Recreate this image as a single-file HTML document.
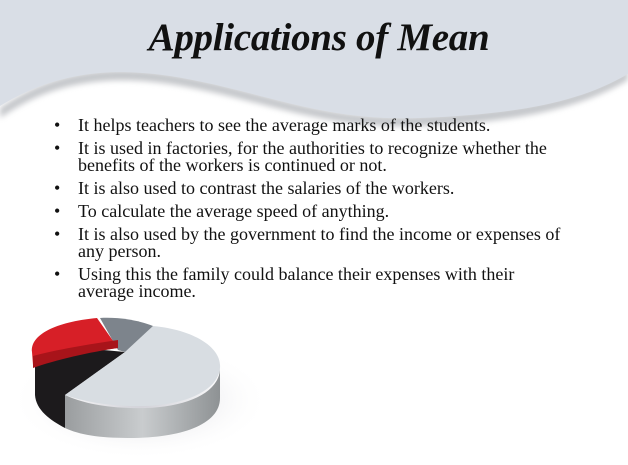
<!DOCTYPE html>
<html><head><style>
html,body{margin:0;padding:0;width:628px;height:465px;overflow:hidden;background:#fff;position:relative}
svg{position:absolute;left:0;top:0}
.t{position:absolute;left:0;width:638px;top:15px;text-align:center;font-family:"Liberation Serif",serif;font-style:italic;font-weight:bold;font-size:39px;color:#111;letter-spacing:-0.3px}
ul{position:absolute;left:50px;top:117px;margin:0;padding:0;list-style:none;font-family:"Liberation Serif",serif;font-size:18px;line-height:17px;color:#111;width:530px}
li{position:relative;padding-left:28px;margin-bottom:6px}
li:before{content:"•";position:absolute;left:4px;top:0}
</style></head><body>
<svg width="628" height="465">
<defs>
<linearGradient id="side" x1="0" x2="1"><stop offset="0" stop-color="#9a9d9f"/><stop offset="0.5" stop-color="#c9ccce"/><stop offset="1" stop-color="#8e9294"/></linearGradient>
<radialGradient id="sh" cx="0.5" cy="0.5" r="0.5"><stop offset="0" stop-color="#c8c8d0"/><stop offset="1" stop-color="#fff" stop-opacity="0"/></radialGradient>
<filter id="b"><feGaussianBlur stdDeviation="3"/></filter>
</defs>
<path d="M0,108 C40,80 90,62 170,74 C260,88 320,122 420,116 C520,110 580,100 628,70 L628,80 C580,108 520,122 420,126 C320,130 260,98 170,84 C90,72 40,90 0,118Z" fill="#8a8f96" filter="url(#b)" opacity="0.5"/>
<path d="M0,0 H628 V74 C580,102 520,114 420,118 C320,122 260,90 170,76 C90,64 40,82 0,106Z" fill="#d9dee6"/>
<ellipse cx="140" cy="400" rx="130" ry="60" fill="url(#sh)"/>
<path d="M220,368 C220,395 180,410 130,408 C100,407 80,402 65,395 L65,428 C80,435 100,438 130,438 C180,438 220,425 220,398Z" fill="url(#side)"/>
<path d="M125,352 L65,395 L65,428 C50,420 36,410 35,395 L35,362 C38,355 44,350 50,345Z" fill="#1c1a1c"/>
<path d="M125,352 L153,326 C195,330 222,348 220,368 C218,392 180,408 130,406 C100,405 80,400 65,395Z" fill="#d8dde2"/>
<path d="M100,318 C118,317 138,320 153,326 L125,352 L118,350Z" fill="#7d848c"/>
<path d="M97,318 L118,348 C90,352 55,358 33,365 L32,352 C30,335 55,322 97,318Z" fill="#d71f27"/>
<path d="M33,352 L33,368 C55,360 90,352 118,348 L118,340 C90,344 55,350 33,356Z" fill="#a8141a"/>
</svg>
<div class="t">Applications of Mean</div>
<ul>
<li>It helps teachers to see the average marks of the students.</li>
<li>It is used in factories, for the authorities to recognize whether the benefits of the workers is continued or not.</li>
<li>It is also used to contrast the salaries of the workers.</li>
<li>To calculate the average speed of anything.</li>
<li>It is also used by the government to find the income or expenses of any person.</li>
<li>Using this the family could balance their expenses with their<br>average income.</li>
</ul>
</body></html>
